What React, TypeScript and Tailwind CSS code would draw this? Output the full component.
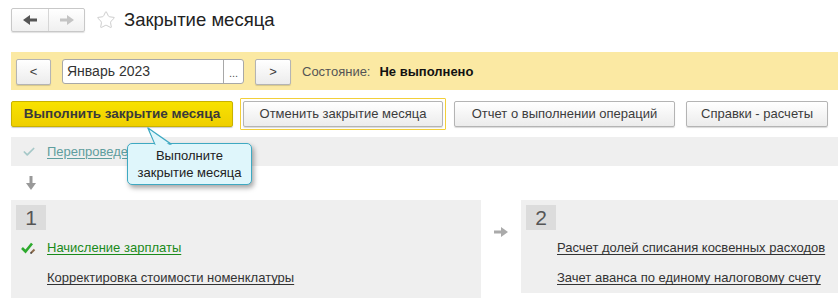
import { Star, Check } from "lucide-react";

const font = { fontFamily: '"Liberation Sans", Arial, sans-serif' };

const GrayButton = ({ label, className = "" }: { label: string; className?: string }) => (
  <button
    className={`h-[26px] rounded-[2px] border border-[#b4b4b4] bg-gradient-to-b from-white to-[#ececec] px-3 text-[13px] text-[#3c3c3c] shadow-[0_1px_1px_rgba(0,0,0,0.15)] ${className}`}
  >
    {label}
  </button>
);

// blocky 1C-style arrow, pointing right by default
const BlockArrow = ({ color, rotate = 0 }: { color: string; rotate?: number }) => (
  <svg width="14" height="10" viewBox="0 0 14 10" style={{ transform: `rotate(${rotate}deg)` }}>
    <rect x="0" y="3.5" width="8" height="3" fill={color} />
    <path d="M7 0 L14 5 L7 10 Z" fill={color} />
  </svg>
);

const StepLink = ({ label, green = false, checked = false }: { label: string; green?: boolean; checked?: boolean }) => (
  <div className="flex h-[30px] items-center">
    <div className="flex w-[36px] justify-center">
      {checked && (
        <svg width="16" height="12" viewBox="0 0 16 12">
          <path d="M1 6 L4.5 9.5 L11 1.5" fill="none" stroke="#2eaa2e" strokeWidth="2.6" />
          <path d="M10 11 L13.5 7.5" stroke="#8a6a4a" strokeWidth="2" />
          <path d="M9.5 11.5 L10.5 10.5" stroke="#333" strokeWidth="1.5" />
        </svg>
      )}
    </div>
    <span
      className={`text-[13px] underline underline-offset-2 ${green ? "text-[#1a8a1a] decoration-[#1a8a1a]" : "text-[#333] decoration-[#333]"}`}
    >
      {label}
    </span>
  </div>
);

const StepNumber = ({ n }: { n: number }) => (
  <div className="flex h-[25px] w-[30px] items-center justify-center bg-[#dcdcdc] text-[21px] leading-none text-[#555]">{n}</div>
);

export default function App() {
  return (
    <div className="relative h-[298px] w-[838px] overflow-hidden bg-white pl-[11px]" style={font}>
      {/* header */}
      <div className="flex h-[24px] items-center mt-[8px]">
        <div className="flex h-[24px] rounded-[2px] border border-[#c8c8c8] bg-gradient-to-b from-white to-[#f0f0f0] shadow-[0_1px_1px_rgba(0,0,0,0.12)]">
          <div className="flex w-[37px] items-center justify-center border-r border-[#d6d6d6]">
            <BlockArrow color="#555" rotate={180} />
          </div>
          <div className="flex w-[35px] items-center justify-center">
            <BlockArrow color="#c4c4c4" />
          </div>
        </div>
        <Star size={20} strokeWidth={1.1} color="#c8c8c8" className="ml-[11px]" />
        <span className="ml-[8px] text-[18.5px] leading-none text-[#222]">Закрытие месяца</span>
      </div>

      {/* period band */}
      <div className="mt-[20px] flex h-[38px] items-start gap-[11px] bg-[#fbe9a3] pl-[5px] pt-[7px]">
        <GrayButton label="<" className="h-[25px] w-[35px] px-0" />
        <div className="flex h-[25px] w-[182px] rounded-[3px] border border-[#a8a8a8] bg-white">
          <div className="flex flex-1 items-center pl-[4px] text-[14px] text-[#333]">Январь 2023</div>
          <div className="flex w-[20px] items-end justify-center border-l border-[#a8a8a8] pb-[4px] text-[11px] leading-none text-[#555]">...</div>
        </div>
        <GrayButton label=">" className="h-[25px] w-[36px] px-0" />
        <div className="flex h-[25px] items-center text-[13px]">
          <span className="text-[#555]">Состояние:</span>
          <span className="ml-[9px] font-bold text-[#111]">Не выполнено</span>
        </div>
      </div>

      {/* actions */}
      <div className="mt-[8px] flex h-[32px] items-center">
        <button className="h-[26px] w-[222px] rounded-[2px] border border-[#c9b200] bg-gradient-to-b from-[#f8e200] to-[#efcf00] text-[13.5px] font-bold text-[#3a3a3a] shadow-[0_1px_1px_rgba(0,0,0,0.2)]">
          Выполнить закрытие месяца
        </button>
        <div className="ml-[7px] rounded-[1px] border border-[#f2cf3a] p-[2px]">
          <GrayButton label="Отменить закрытие месяца" className="w-[200px]" />
        </div>
        <GrayButton label="Отчет о выполнении операций" className="ml-[8px] w-[221px]" />
        <GrayButton label="Справки - расчеты" className="ml-[11px] w-[142px]" />
      </div>

      {/* previous step */}
      <div className="mt-[7px] flex h-[29px] items-center bg-[#efefef]">
        <div className="flex w-[36px] justify-center">
          <Check size={14} strokeWidth={3} color="#a6c8c8" />
        </div>
        <span className="text-[13px] text-[#5f9e9e] underline decoration-[#5f9e9e] underline-offset-2">Перепроведение документов</span>
      </div>
      <div className="flex h-[34px] items-center pl-[13px]">
        <BlockArrow color="#999" rotate={90} />
      </div>

      {/* steps */}
      <div className="flex items-start">
        <div className="h-[98px] w-[470px] bg-[#efefef] pl-[5px] pt-[5px]">
          <StepNumber n={1} />
          <div className="-ml-[5px] mt-[3px]">
            <StepLink label="Начисление зарплаты" green checked />
            <StepLink label="Корректировка стоимости номенклатуры" />
          </div>
        </div>
        <div className="flex w-[40px] justify-center pt-[27px]">
          <BlockArrow color="#aaa" />
        </div>
        <div className="h-[93px] flex-1 bg-[#efefef] pl-[5px] pt-[5px]">
          <StepNumber n={2} />
          <div className="-ml-[5px] mt-[3px]">
            <StepLink label="Расчет долей списания косвенных расходов" />
            <StepLink label="Зачет аванса по единому налоговому счету" />
          </div>
        </div>
      </div>

      {/* tooltip */}
      <div className="absolute left-[127px] top-[127px]">
        <svg width="60" height="20" className="absolute left-0 top-0" style={{ overflow: "visible" }}>
          <path d="M21 1 L28 17 L44 17 Z" fill="#dff6fb" stroke="#3ea9c2" strokeWidth="1.5" strokeLinejoin="round" />
        </svg>
        <div className="mt-[16px] flex h-[42px] w-[125px] flex-col items-center justify-center rounded-[5px] border-[1.5px] border-[#3ea9c2] bg-[#dff6fb] text-[13px] leading-[17px] text-[#222] shadow-[2px_3px_5px_rgba(0,0,0,0.35)]">
          <span>Выполните</span>
          <span>закрытие месяца</span>
        </div>
        <svg width="60" height="20" className="absolute left-0 top-0">
          <path d="M22.5 3 L29 18.5 L43 18.5 Z" fill="#dff6fb" />
        </svg>
      </div>
    </div>
  );
}
